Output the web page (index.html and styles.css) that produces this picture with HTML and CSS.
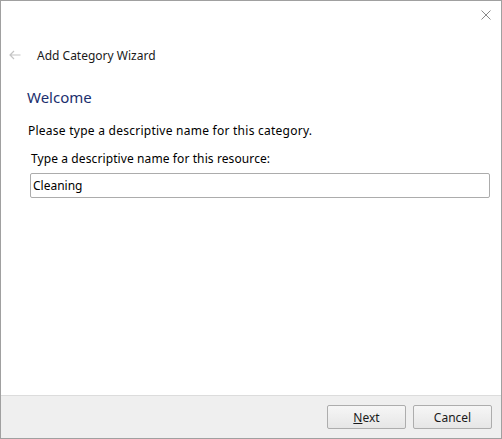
FILE: index.html
```html
<!DOCTYPE html>
<html lang="en">
<head>
  <meta charset="UTF-8">
  <title>Add Category Wizard</title>
  <link rel="stylesheet" href="styles.css">
</head>
<body>
  <div class="window">
    <div class="titlebar">
      <!-- close glyph -->
      <svg class="close" width="10" height="10" viewBox="0 0 10 10">
        <path d="M0.5 0.5 L9.5 9.5 M9.5 0.5 L0.5 9.5" stroke="#8a8a8a" stroke-width="1" fill="none"/>
      </svg>
    </div>

    <div class="header">
      <svg class="back" width="12" height="10" viewBox="0 0 12 10">
        <path d="M11.5 5 H1 M5 1 L1 5 L5 9" stroke="#c4c4c4" stroke-width="1.2" fill="none"/>
      </svg>
      <span class="title">Add Category Wizard</span>
    </div>

    <div class="content">
      <h2 class="heading">Welcome</h2>
      <p class="intro">Please type a descriptive name for this category.</p>
      <label class="field-label" for="name">Type a descriptive name for this resource:</label>
      <input class="field" id="name" type="text" value="Cleaning">
    </div>

    <div class="footer">
      <button class="btn"><u>N</u>ext</button>
      <button class="btn">Cancel</button>
    </div>
  </div>
</body>
</html>
```

FILE: styles.css
```css
body {
  margin: 0;
  font-family: "Noto Sans", "Open Sans", sans-serif;
  font-size: 12px;
  color: #000;
  background: #fff;
}

.window {
  width: 502px;
  height: 439px;
  box-sizing: border-box;
  border: 1px solid #a0a0a0;
  display: flex;
  flex-direction: column;
  background: #fff;
}

.titlebar {
  height: 29px;
  display: flex;
  justify-content: flex-end;
  align-items: flex-start;
}

.close {
  margin: 9px 10px 0 0;
}

.header {
  display: flex;
  align-items: center;
  height: 20px;
  margin-top: 15px;
  padding-left: 8px;
}

.back {
  margin-right: 16px;
}

.title {
  color: #1a1a1a;
}

.content {
  padding: 0 11px 0 26px;
}

.heading {
  margin: 22px 0 0;
  font-size: 15px;
  font-weight: normal;
  color: #1b2f6e;
  line-height: 20px;
}

.intro {
  margin: 16px 0 0 1px;
  line-height: 16px;
  letter-spacing: 0.25px;
}

.field-label {
  display: block;
  margin: 12px 0 0 4px;
  line-height: 16px;
  letter-spacing: 0.1px;
}

.field {
  display: block;
  box-sizing: border-box;
  width: 460px;
  height: 25px;
  margin: 6px 0 0 3px;
  padding: 0 2px;
  border: 1px solid #acacac;
  border-radius: 2px;
  font: inherit;
  color: #000;
}

.footer {
  margin-top: auto;
  height: 43px;
  box-sizing: border-box;
  border-top: 1px solid #dcdcdc;
  background: #efefef;
  display: flex;
  justify-content: flex-end;
  align-items: flex-start;
  gap: 7px;
  padding: 9px 9px 0 0;
}

.btn {
  width: 79px;
  height: 24px;
  border: 1px solid #adadad;
  border-radius: 2px;
  background: linear-gradient(#f6f6f6, #e6e6e6);
  font: inherit;
  color: #1a1a1a;
  padding: 0;
}
```
